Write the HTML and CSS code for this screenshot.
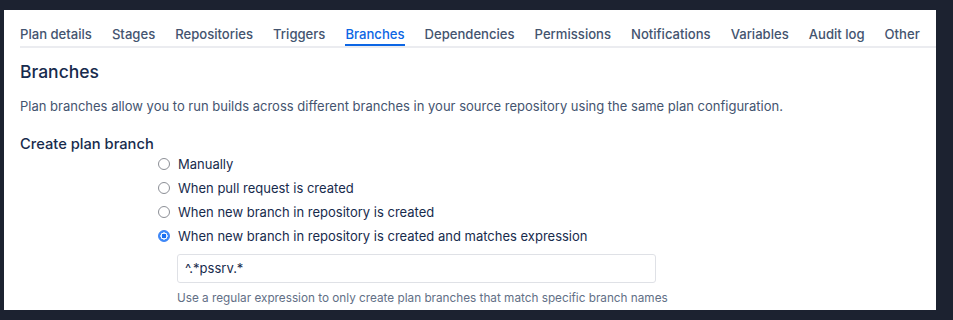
FILE: index.html
```html
<!DOCTYPE html>
<html>
<head>
<meta charset="utf-8">
<link rel="stylesheet" href="styles.css">
</head>
<body>
<div class="panel">
  <nav class="tabs">
    <span class="tab">Plan details</span>
    <span class="tab">Stages</span>
    <span class="tab">Repositories</span>
    <span class="tab">Triggers</span>
    <span class="tab active">Branches</span>
    <span class="tab">Dependencies</span>
    <span class="tab">Permissions</span>
    <span class="tab">Notifications</span>
    <span class="tab">Variables</span>
    <span class="tab">Audit log</span>
    <span class="tab">Other</span>
  </nav>
  <h1 class="title">Branches</h1>
  <p class="desc">Plan branches allow you to run builds across different branches in your source repository using the same plan configuration.</p>
  <h2 class="section">Create plan branch</h2>
  <div class="options">
    <label class="opt"><span class="radio"></span>Manually</label>
    <label class="opt"><span class="radio"></span>When pull request is created</label>
    <label class="opt"><span class="radio"></span>When new branch in repository is created</label>
    <label class="opt"><span class="radio checked"></span>When new branch in repository is created and matches expression</label>
    <div class="field">
      <div class="input">^.*pssrv.*</div>
      <div class="help">Use a regular expression to only create plan branches that match specific branch names</div>
    </div>
  </div>
</div>
</body>
</html>
```
FILE: styles.css
```css
html, body {
  margin: 0;
  padding: 0;
  background: #1c2230;
}
body {
  width: 953px;
  height: 320px;
  overflow: hidden;
  font-family: Inter, "Noto Sans", "Liberation Sans", sans-serif;
  -webkit-font-smoothing: antialiased;
}
.panel {
  margin: 10px 0 0 4px;
  width: 932px;
  height: 300px;
  background: #ffffff;
  overflow: hidden;
  box-sizing: border-box;
  padding-left: 16px;
}
.tabs {
  display: flex;
  gap: 20px;
  padding-top: 14px;
  border-bottom: 2px solid #ebecf0;
  height: 22px;
  box-sizing: content-box;
  white-space: nowrap;
}
.tab {
  flex-shrink: 0;
  font-size: 13.1px;
  font-weight: 500;
  color: #44546f;
  line-height: 20px;
  height: 20px;
  border-bottom: 2px solid transparent;
}
.tab.active {
  color: #0c66e4;
  border-bottom-color: #0c66e4;
}
.title {
  margin: 12px 0 0 0;
  font-size: 17.5px;
  font-weight: 500;
  line-height: 24px;
  color: #172b4d;
}
.desc {
  margin: 12px 0 0 0;
  font-size: 13px;
  line-height: 20px;
  color: #44546f;
}
.section {
  margin: 18px 0 0 0;
  font-size: 14.7px;
  font-weight: 500;
  line-height: 20px;
  color: #172b4d;
}
.options {
  margin-left: 138px;
  margin-top: -2px;
  display: flex;
  flex-direction: column;
}
.opt {
  display: flex;
  align-items: center;
  height: 24px;
  font-size: 13px;
  color: #172b4d;
}
.radio {
  width: 10px;
  height: 10px;
  border: 1px solid #8c8f96;
  border-radius: 50%;
  margin-right: 8px;
  box-sizing: content-box;
  background: #fff;
}
.radio.checked {
  border-color: #3b82f6;
  background: radial-gradient(circle, #1a6ff0 0 2.2px, #ffffff 2.6px 3.4px, #3d8bfa 3.8px);
}
.field {
  margin-left: 19px;
  margin-top: 6px;
}
.input {
  width: 479px;
  height: 29px;
  box-sizing: border-box;
  border: 1px solid #dfe1e6;
  border-radius: 3px;
  padding: 0 7px;
  line-height: 27px;
  font-size: 13px;
  color: #172b4d;
}
.help {
  margin-top: 7px;
  font-size: 11.75px;
  line-height: 16px;
  color: #626f86;
}
```
